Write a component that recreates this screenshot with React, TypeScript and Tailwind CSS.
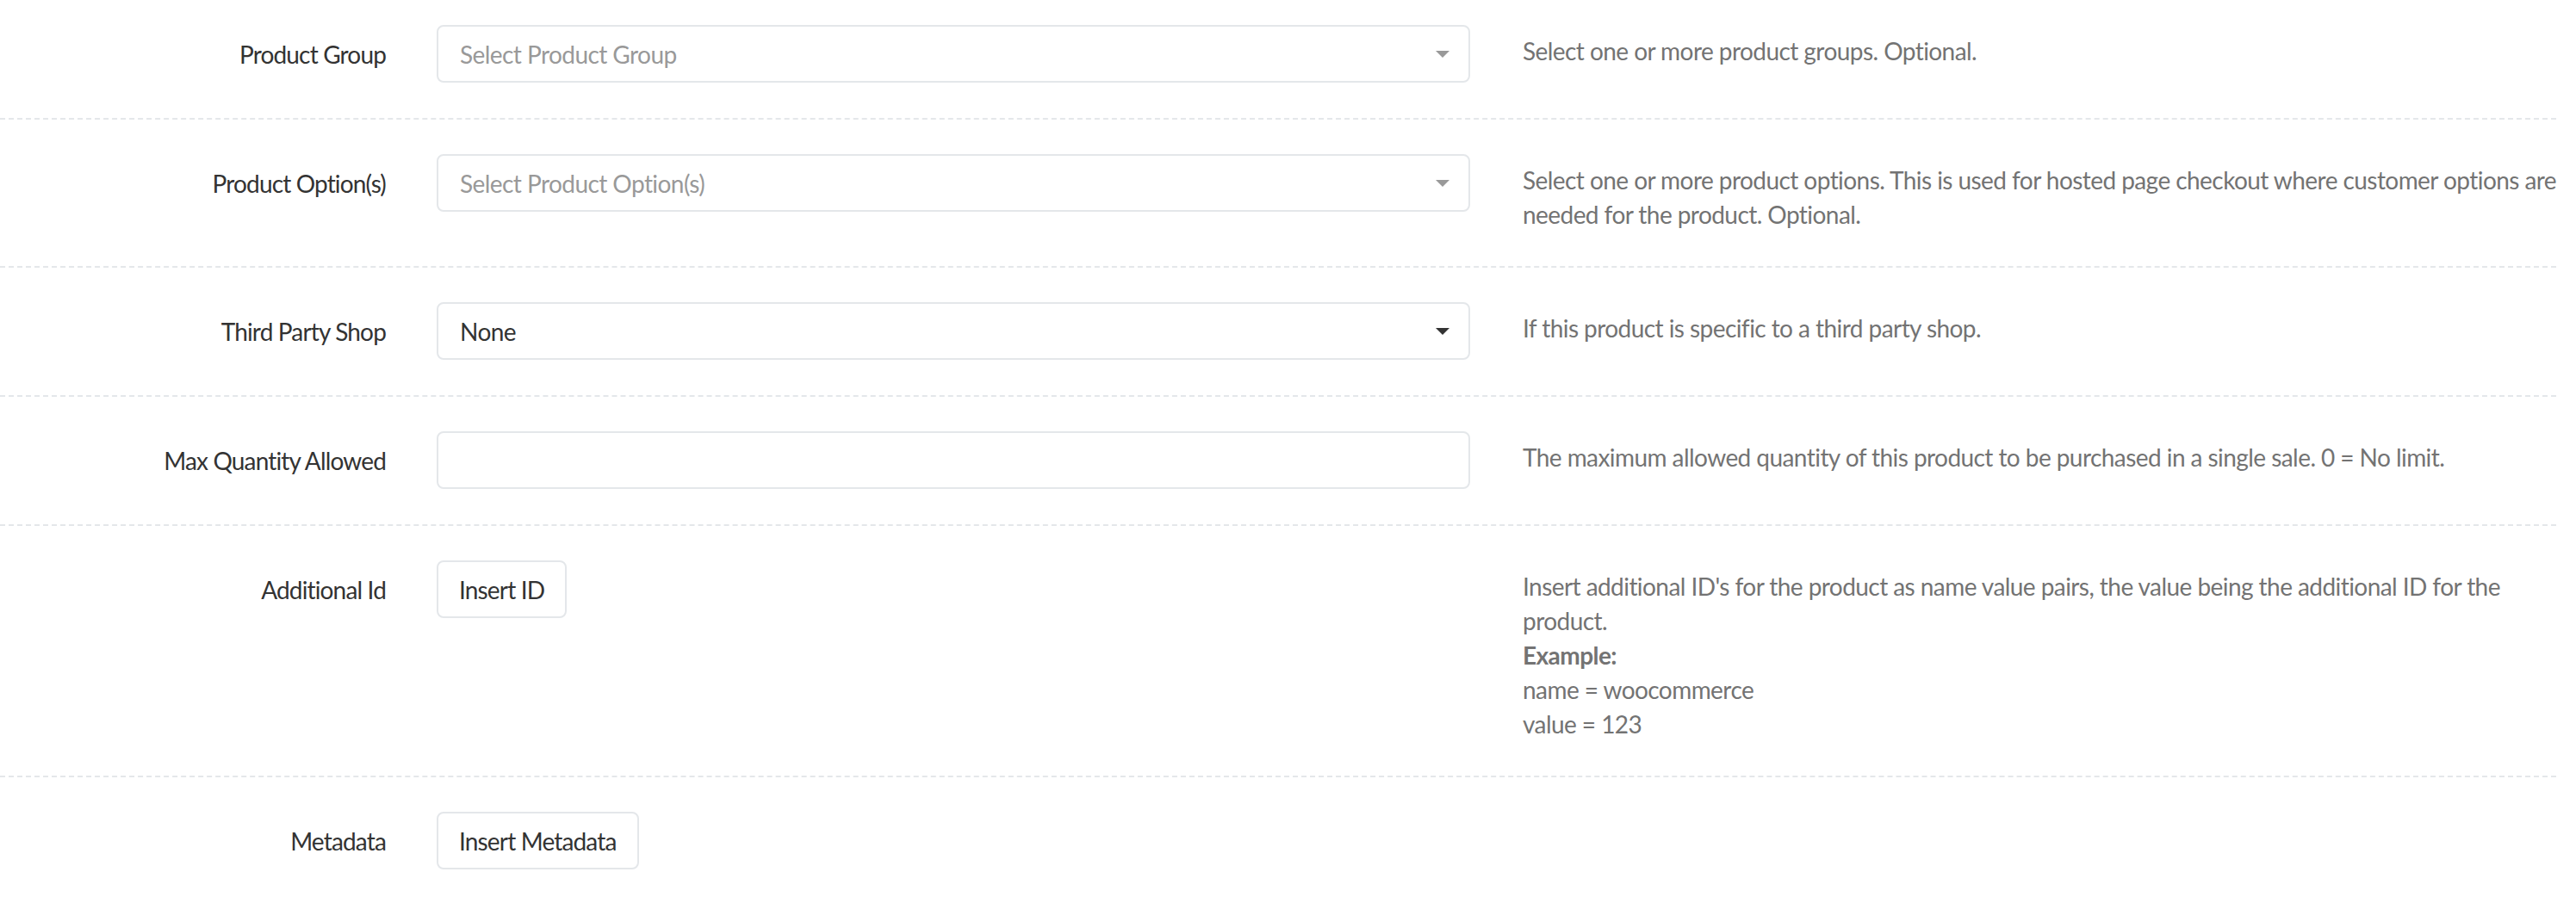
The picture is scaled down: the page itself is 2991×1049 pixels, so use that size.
import type { ReactNode } from "react";

const FONT = "font-['Lato','Noto_Sans',sans-serif]";

function Caret({ muted }: { muted?: boolean }) {
  return (
    <svg width="16" height="8" viewBox="0 0 16 8" aria-hidden="true">
      <path d="M0 0h16L8 8z" fill={muted ? "#999999" : "#333333"} />
    </svg>
  );
}

function SelectBox({ value, placeholder }: { value?: string; placeholder?: string }) {
  return (
    <div className="flex h-[67px] items-center justify-between rounded-[8px] border-2 border-[#e4e7ea] bg-white pl-[25px] pr-[22px]">
      <span className={value ? "text-[#333333]" : "text-[#999999]"}>{value ?? placeholder}</span>
      <Caret muted={!value} />
    </div>
  );
}

function Row({
  label,
  control,
  help,
  first,
  last,
}: {
  label: string;
  control: ReactNode;
  help?: ReactNode;
  first?: boolean;
  last?: boolean;
}) {
  return (
    <div
      className={`flex pb-[30px] ${first ? "pt-[29px]" : "pt-[40px]"} ${
        last ? "" : "border-b-2 border-dashed border-[#e4e7ea]"
      }`}
    >
      <label className="w-[448px] shrink-0 pt-[14px] text-right leading-[40px] tracking-[-0.03em] text-[#333333]">
        {label}
      </label>
      <div className="ml-[59px] w-[1200px] shrink-0 pb-[11px]">{control}</div>
      <div className="ml-[61px] flex-1 whitespace-nowrap py-[10px] leading-[40px] text-[#737373]">{help}</div>
    </div>
  );
}

function Button({ children }: { children: ReactNode }) {
  return (
    <button
      type="button"
      className="h-[67px] rounded-[8px] border-2 border-[#e4e7ea] bg-white px-[24px] leading-[40px] tracking-[-0.03em] text-[#333333]"
    >
      {children}
    </button>
  );
}

export default function App() {
  return (
    <div className={`min-h-screen bg-white pr-[23px] text-[28px] tracking-[-0.02em] ${FONT}`}>
      <Row
        first
        label="Product Group"
        control={<SelectBox placeholder="Select Product Group" />}
        help="Select one or more product groups. Optional."
      />
      <Row
        label="Product Option(s)"
        control={<SelectBox placeholder="Select Product Option(s)" />}
        help={
          <>
            Select one or more product options. This is used for hosted page checkout where customer options are
            <br />
            needed for the product. Optional.
          </>
        }
      />
      <Row
        label="Third Party Shop"
        control={<SelectBox value="None" />}
        help="If this product is specific to a third party shop."
      />
      <Row
        label="Max Quantity Allowed"
        control={
          <input
            type="text"
            className="block h-[67px] w-full rounded-[8px] border-2 border-[#e4e7ea] px-[25px] text-[#333333] outline-none"
          />
        }
        help="The maximum allowed quantity of this product to be purchased in a single sale. 0 = No limit."
      />
      <Row
        label="Additional Id"
        control={<Button>Insert ID</Button>}
        help={
          <>
            Insert additional ID's for the product as name value pairs, the value being the additional ID for the
            <br />
            product.
            <br />
            <strong className="font-bold">Example:</strong>
            <br />
            name = woocommerce
            <br />
            value = 123
          </>
        }
      />
      <Row last label="Metadata" control={<Button>Insert Metadata</Button>} />
    </div>
  );
}
